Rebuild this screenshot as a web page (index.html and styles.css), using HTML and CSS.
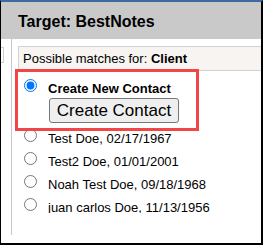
FILE: index.html
```html
<!DOCTYPE html>
<html>
<head>
<meta charset="utf-8">
<link rel="stylesheet" href="styles.css">
</head>
<body>
<div class="frame">
  <div class="header"><span class="title">Target: BestNotes</span></div>
  <div class="body">
    <div class="side"><div class="stub"></div></div>
    <div class="main">
      <div class="matches">Possible matches for: <b>Client</b></div>
      <div class="list">
        <div class="row first">
          <input type="radio" name="m" class="radio" checked>
          <div class="col">
            <span class="label bold">Create New Contact</span>
            <button class="btn">Create Contact</button>
          </div>
        </div>
        <div class="row"><input type="radio" name="m" class="radio"><span class="label">Test Doe, 02/17/1967</span></div>
        <div class="row"><input type="radio" name="m" class="radio"><span class="label">Test2 Doe, 01/01/2001</span></div>
        <div class="row"><input type="radio" name="m" class="radio"><span class="label">Noah Test Doe, 09/18/1968</span></div>
        <div class="row"><input type="radio" name="m" class="radio"><span class="label">juan carlos Doe, 11/13/1956</span></div>
      </div>
    </div>
  </div>
  <div class="highlight"></div>
</div>
</body>
</html>
```
FILE: styles.css
```css
* { box-sizing: border-box; }
html, body { margin: 0; padding: 0; background: #fff; }
body { font-family: "Liberation Sans", Arial, sans-serif; color: #000; }
.frame {
  position: relative;
  width: 263px;
  height: 245px;
  border-top: 2px solid #3d6b9f;
  border-left: 1px solid #000;
  border-right: 2px solid #000;
  border-bottom: 2px solid #000;
  overflow: hidden;
  display: flex;
  flex-direction: column;
}
.header {
  height: 37px;
  flex: none;
  background: #c9c9c9;
  padding-left: 17px;
  padding-top: 11px;
}
.title { font-weight: bold; font-size: 16px; line-height: 18px; display: block; }
.body { display: flex; flex: 1; }
.side {
  width: 11px;
  height: 196px;
  border-right: 1px solid #c8c8c8;
  flex: none;
}
.stub {
  margin-top: 8px;
  width: 3px;
  height: 16px;
  border: 1px solid #cfcfcf;
  border-left: none;
}
.main { flex: 1; padding-left: 6px; padding-top: 7px; min-width: 0; }
.matches {
  height: 25px;
  background: #f7f4f1;
  border-top: 1px solid #d2d2d2;
  border-bottom: 1px solid #d2d2d2;
  border-left: 1px solid #d2d2d2;
  padding-left: 4px;
  font-size: 13px;
  line-height: 23px;
  white-space: nowrap;
}
.list {
  height: 142px;
  overflow: hidden;
  padding-top: 8px;
  padding-left: 6px;
}
.row { display: flex; align-items: flex-start; height: 23px; }
.row.first { height: auto; margin-bottom: 6px; }
.radio { margin: 0 11px 0 0; width: 13px; height: 13px; flex: none; }
.col { display: flex; flex-direction: column; align-items: flex-start; }
.label { font-size: 13px; line-height: 15px; margin-top: 2px; white-space: nowrap; }
.bold { font-weight: bold; }
.btn {
  margin-top: 2px;
  margin-left: 1px;
  width: 130px;
  height: 25px;
  padding: 0;
  font-family: "Liberation Sans", Arial, sans-serif;
  font-size: 17px;
  color: #000;
  background: #efefef;
  border: 1px solid #767676;
  border-radius: 3px;
}
.highlight {
  position: absolute;
  left: 14px;
  top: 67px;
  width: 184px;
  height: 62px;
  border: 3px solid #f24545;
}
```
